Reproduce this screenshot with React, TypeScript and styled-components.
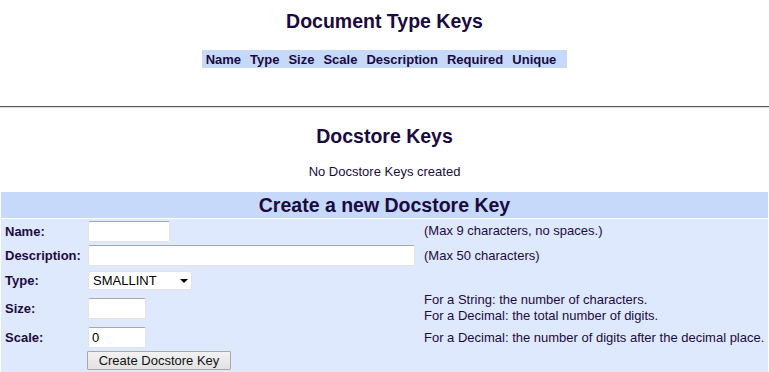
import React from "react";
import styled, { createGlobalStyle } from "styled-components";

const Global = createGlobalStyle`
  html, body { margin: 0; padding: 0; background: #ffffff; }
  body { font-family: "Liberation Sans", Arial, sans-serif; font-size: 13px; color: #1d0b40; }
`;

const Page = styled.div`
  display: flex;
  flex-direction: column;
  align-items: stretch;
`;

const Title = styled.h2<{ $top: number }>`
  margin: ${(p) => p.$top}px 0 0;
  font-size: 19.5px;
  line-height: 23px;
  font-weight: bold;
  text-align: center;
  color: #1a0a40;
`;

const KeysTable = styled.div`
  align-self: center;
  margin-top: 17px;
  display: flex;
  gap: 9px;
  height: 18px;
  align-items: center;
  padding: 0 11px 0 4px;
  background: #c6d9fb;
`;

const HeadCell = styled.span`
  font-weight: bold;
  font-size: 13px;
  color: #1a0a40;
`;

const Rule = styled.hr`
  margin: 38px 0 0;
  height: 0;
  border: none;
  border-top: 1px solid #5a5a5a;
  border-bottom: 1px solid #dcdcdc;
`;

const Note = styled.p`
  margin: 16px 0 0;
  line-height: 16px;
  text-align: center;
`;

const Form = styled.div`
  margin: 12px 1px 0;
  display: flex;
  flex-direction: column;
  gap: 1px;
`;

const FormHead = styled.div`
  height: 26px;
  background: #c6d9fb;
  display: flex;
  align-items: center;
  justify-content: center;
  font-size: 19.5px;
  font-weight: bold;
  color: #1a0a40;
`;

const FormBody = styled.div`
  background: #dee9fd;
  display: grid;
  grid-template-columns: 83px 336px 1fr;
  grid-template-rows: 24px 25px 24px 32px 27px 24px;
  padding-left: 3px;
`;

const Label = styled.div`
  font-weight: bold;
  align-self: center;
  padding-left: 1px;
`;

const Cell = styled.div<{ $align?: string }>`
  display: flex;
  align-items: ${(p) => p.$align || "center"};
  padding-left: 1px;
`;

const Help = styled.div`
  align-self: center;
  line-height: 16px;
  white-space: nowrap;
  padding-left: 1px;
`;

const TextInput = styled.input<{ $w: number }>`
  box-sizing: border-box;
  width: ${(p) => p.$w}px;
  height: 21px;
  margin: 0;
  padding: 1px 3px;
  background: #ffffff;
  border: 1px solid #e3e3e3;
  border-top-color: #a8a8a8;
  border-radius: 2px;
  font-family: "Liberation Sans", Arial, sans-serif;
  font-size: 13px;
  color: #000;
  outline: none;
`;

const SelectWrap = styled.div`
  position: relative;
  width: 104px;
  height: 19px;
`;

const Select = styled.select`
  box-sizing: border-box;
  width: 104px;
  height: 19px;
  margin: 0;
  padding: 0 0 0 4px;
  appearance: none;
  -webkit-appearance: none;
  background: #ffffff;
  border: 1px solid #e3e3e3;
  border-radius: 2px;
  font-family: "Liberation Sans", Arial, sans-serif;
  font-size: 13px;
  color: #000;
  outline: none;
`;

const Arrow = styled.svg`
  position: absolute;
  right: 4px;
  top: 8px;
  pointer-events: none;
`;

const Button = styled.button`
  box-sizing: border-box;
  width: 144px;
  height: 19px;
  margin: 0 0 0 -1px;
  padding: 0;
  background: linear-gradient(#f2f2f2, #e2e2e2);
  border: 1px solid #a9a9a9;
  border-radius: 1px;
  font-family: "Liberation Sans", Arial, sans-serif;
  font-size: 13px;
  color: #111;
`;

const headers = ["Name", "Type", "Size", "Scale", "Description", "Required", "Unique"];

export default function App() {
  return (
    <Page>
      <Global />
      <Title $top={10}>Document Type Keys</Title>
      <KeysTable>
        {headers.map((h) => (
          <HeadCell key={h}>{h}</HeadCell>
        ))}
      </KeysTable>
      <Rule />
      <Title $top={17}>Docstore Keys</Title>
      <Note>No Docstore Keys created</Note>
      <Form>
        <FormHead>Create a new Docstore Key</FormHead>
        <FormBody>
          <Label>Name:</Label>
          <Cell>
            <TextInput $w={82} defaultValue="" />
          </Cell>
          <Help>(Max 9 characters, no spaces.)</Help>

          <Label>Description:</Label>
          <Cell>
            <TextInput $w={327} defaultValue="" />
          </Cell>
          <Help>(Max 50 characters)</Help>

          <Label>Type:</Label>
          <Cell>
            <SelectWrap>
              <Select defaultValue="SMALLINT">
                <option>SMALLINT</option>
                <option>INTEGER</option>
                <option>DECIMAL</option>
                <option>STRING</option>
              </Select>
              <Arrow width="8" height="4" viewBox="0 0 8 4">
                <path d="M0 0 H8 L4 4 Z" fill="#000" />
              </Arrow>
            </SelectWrap>
          </Cell>
          <Help />

          <Label>Size:</Label>
          <Cell>
            <TextInput $w={58} defaultValue="" />
          </Cell>
          <Help>
            For a String: the number of characters.
            <br />
            For a Decimal: the total number of digits.
          </Help>

          <Label>Scale:</Label>
          <Cell>
            <TextInput $w={58} defaultValue="0" />
          </Cell>
          <Help>For a Decimal: the number of digits after the decimal place.</Help>

          <div />
          <Cell $align="flex-start">
            <Button type="button">Create Docstore Key</Button>
          </Cell>
          <div />
        </FormBody>
      </Form>
    </Page>
  );
}
